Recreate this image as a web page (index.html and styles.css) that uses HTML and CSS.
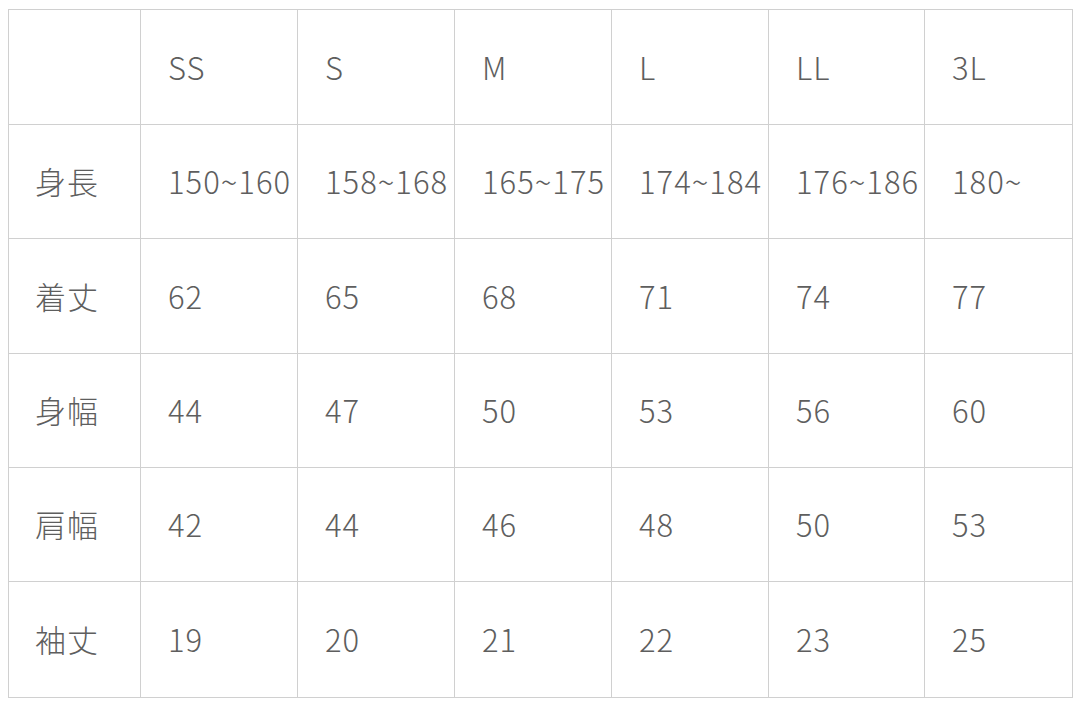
FILE: index.html
```html
<!DOCTYPE html>
<html lang="ja">
<head>
<meta charset="utf-8">
<link rel="stylesheet" href="styles.css">
</head>
<body>
<table class="size">
  <colgroup>
    <col class="c0"><col class="c"><col class="c"><col class="c"><col class="c"><col class="c5"><col class="cl">
  </colgroup>
  <tr><td></td><td>SS</td><td>S</td><td>M</td><td>L</td><td>LL</td><td>3L</td></tr>
  <tr><td>身長</td><td>150~160</td><td>158~168</td><td>165~175</td><td>174~184</td><td>176~186</td><td>180~</td></tr>
  <tr><td>着丈</td><td>62</td><td>65</td><td>68</td><td>71</td><td>74</td><td>77</td></tr>
  <tr><td>身幅</td><td>44</td><td>47</td><td>50</td><td>53</td><td>56</td><td>60</td></tr>
  <tr><td>肩幅</td><td>42</td><td>44</td><td>46</td><td>48</td><td>50</td><td>53</td></tr>
  <tr><td>袖丈</td><td>19</td><td>20</td><td>21</td><td>22</td><td>23</td><td>25</td></tr>
</table>
</body>
</html>
```
FILE: styles.css
```css
html, body {
  margin: 0;
  padding: 0;
  background: #fff;
}
body {
  padding: 9px 0 0 8px;
}
.size {
  border-collapse: collapse;
  table-layout: fixed;
  width: 1064px;
  font-family: "Noto Sans CJK JP", "Noto Sans", sans-serif;
  font-weight: 300;
  font-size: 31px;
  letter-spacing: 1px;
  color: #5e5e5e;
}
.c0 { width: 132px; }
.c { width: 157px; }
.c5 { width: 156px; }
.cl { width: 148px; }
.size td {
  border: 1px solid #d0d0d0;
  height: 111px;
  padding: 0 0 2px 27px;
  vertical-align: middle;
  white-space: nowrap;
  line-height: 1;
}
.size tr:nth-child(1) td,
.size tr:nth-child(3) td {
  height: 112px;
}
.size tr:nth-child(6) td {
  height: 113px;
}
.size td:first-child {
  padding-left: 26px;
}
```
